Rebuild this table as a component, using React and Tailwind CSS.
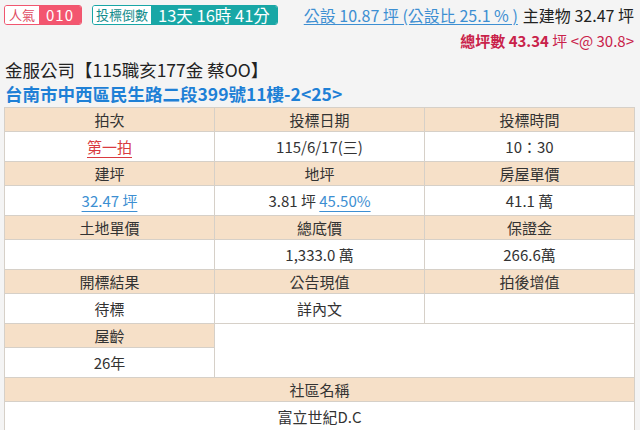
import React from 'react'

const font = { fontFamily: '"Noto Sans CJK TC", "Noto Sans", "Liberation Sans", sans-serif' }

function Head({ children, span = 1 }) {
  return (
    <td colSpan={span} className="h-[24px] border border-[#d6d0c8] bg-[#f6e0c8] p-0 text-center text-[15px] leading-[22px] text-[#333]">
      {children}
    </td>
  )
}

function Val({ children, span = 1 }) {
  return (
    <td colSpan={span} className="h-[30px] border border-[#d6d0c8] bg-white p-0 text-center text-[15px] leading-[28px] text-[#333]">
      {children}
    </td>
  )
}

export default function App() {
  return (
    <div className="h-[430px] w-[640px] overflow-hidden bg-[#f4f4f4]" style={font}>
      <div className="flex justify-between pl-[4px] pr-[6px] pt-[4px]">
        <div className="flex items-start gap-[10px] pt-[1px]">
          <div className="flex h-[20px] rounded-[3px] border border-[#f0566f] leading-[18px]">
            <span className="rounded-l-[2px] bg-white px-[4px] text-[13px] text-[#e04a62]">人氣</span>
            <span className="rounded-r-[2px] bg-[#f3566f] px-[7px] text-[15px] tracking-[1px] text-white">010</span>
          </div>
          <div className="flex h-[20px] rounded-[3px] border border-[#18a6a6] leading-[18px]">
            <span className="rounded-l-[2px] bg-white px-[3px] text-[13px] text-[#138d8d]">投標倒數</span>
            <span className="rounded-r-[2px] bg-[#18a7a6] px-[7px] text-[16.5px] text-white">13天 16時 41分</span>
          </div>
        </div>
        <div className="flex flex-col items-end">
          <div className="text-[16px] leading-[22px]">
            <span className="text-[#3d8fd2] underline decoration-[#3d8fd2] underline-offset-2">公設 10.87 坪 (公設比 25.1 % )</span>
            <span className="ml-[5px] text-[#222]">主建物 32.47 坪</span>
          </div>
          <div className="mt-[4px] text-[15px] leading-[22px] text-[#c9224a]">
            <span className="font-bold">總坪數 43.34</span> 坪 &lt;@ 30.8&gt;
          </div>
        </div>
      </div>

      <div className="mt-[6px] pl-[5px] text-[17.5px] leading-[24px] text-[#222]">金服公司【115職亥177金 蔡OO】</div>
      <div className="pl-[5px] text-[17.5px] font-bold leading-[24px] text-[#1e80d6]">台南市中西區民生路二段399號11樓-2&lt;25&gt;</div>

      <table className="ml-[4px] mt-[1px] w-[631px] table-fixed border-collapse border border-[#bdb6ad]">
        <tbody>
          <tr>
            <Head>拍次</Head>
            <Head>投標日期</Head>
            <Head>投標時間</Head>
          </tr>
          <tr>
            <Val>
              <span className="text-[#d93a40] underline decoration-[#d93a40] underline-offset-4">第一拍</span>
            </Val>
            <Val>115/6/17(三)</Val>
            <Val>10：30</Val>
          </tr>
          <tr>
            <Head>建坪</Head>
            <Head>地坪</Head>
            <Head>房屋單價</Head>
          </tr>
          <tr>
            <Val>
              <span className="text-[#3d8fd2] underline decoration-[#3d8fd2] underline-offset-4">32.47 坪</span>
            </Val>
            <Val>
              3.81 坪{' '}
              <span className="text-[#3d8fd2] underline decoration-[#3d8fd2] underline-offset-4">45.50%</span>
            </Val>
            <Val>41.1 萬</Val>
          </tr>
          <tr>
            <Head>土地單價</Head>
            <Head>總底價</Head>
            <Head>保證金</Head>
          </tr>
          <tr>
            <Val></Val>
            <Val>1,333.0 萬</Val>
            <Val>266.6萬</Val>
          </tr>
          <tr>
            <Head>開標結果</Head>
            <Head>公告現值</Head>
            <Head>拍後增值</Head>
          </tr>
          <tr>
            <Val>待標</Val>
            <Val>詳內文</Val>
            <Val></Val>
          </tr>
          <tr>
            <Head>屋齡</Head>
            <td colSpan={2} rowSpan={2} className="border border-[#d6d0c8] bg-white"></td>
          </tr>
          <tr>
            <Val>26年</Val>
          </tr>
          <tr>
            <Head span={3}>社區名稱</Head>
          </tr>
          <tr>
            <Val span={3}>富立世紀D.C</Val>
          </tr>
        </tbody>
      </table>
    </div>
  )
}
